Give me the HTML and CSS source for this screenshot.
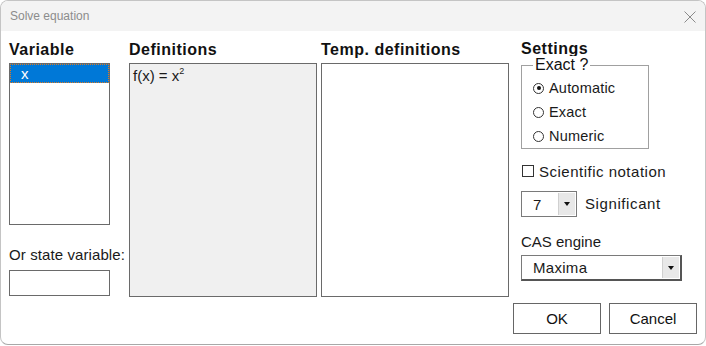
FILE: index.html
```html
<!DOCTYPE html>
<html lang="en">
<head>
    <meta charset="UTF-8">
    <title>Solve equation</title>
    <link rel="stylesheet" href="styles.css">
</head>
<body>
    <div class="window">
        <div class="titlebar">
            <span class="title">Solve equation</span>
            <svg class="close" width="12" height="12" viewBox="0 0 12 12">
                <path d="M0.5 0.5 L11.5 11.5 M11.5 0.5 L0.5 11.5" stroke="#8a8a8a" stroke-width="1" fill="none"/>
            </svg>
        </div>
        <div class="content">
            <div class="columns">
                <div class="col col-var">
                    <div class="header">Variable</div>
                    <div class="listbox">
                        <div class="item selected">x</div>
                    </div>
                    <div class="label state-label">Or state variable:</div>
                    <div class="textbox"></div>
                </div>
                <div class="col col-defs">
                    <div class="header">Definitions</div>
                    <div class="box defs">f(x) = x<sup>2</sup></div>
                </div>
                <div class="col col-temp">
                    <div class="header">Temp. definitions</div>
                    <div class="box temp"></div>
                </div>
                <div class="col col-settings">
                    <div class="header settings-header">Settings</div>
                    <fieldset class="group">
                        <legend>Exact ?</legend>
                        <div class="radio-row"><span class="radio checked"></span>Automatic</div>
                        <div class="radio-row"><span class="radio"></span>Exact</div>
                        <div class="radio-row"><span class="radio"></span>Numeric</div>
                    </fieldset>
                    <div class="check-row"><span class="checkbox"></span>Scientific notation</div>
                    <div class="sig-row">
                        <div class="combo small">
                            <span class="combo-text">7</span>
                            <span class="combo-btn"><span class="arrow"></span></span>
                        </div>
                        <span class="label sig-label">Significant</span>
                    </div>
                    <div class="label cas-label">CAS engine</div>
                    <div class="combo wide">
                        <span class="combo-text">Maxima</span>
                        <span class="combo-btn"><span class="arrow"></span></span>
                    </div>
                </div>
            </div>
            <div class="footer">
                <button class="btn">OK</button>
                <button class="btn">Cancel</button>
            </div>
        </div>
    </div>
</body>
</html>
```

FILE: styles.css
```css
body {
    margin: 0;
    background: #ffffff;
    font-family: "Liberation Sans", Arial, sans-serif;
    color: #1a1a1a;
}
.window {
    width: 706px;
    height: 345px;
    box-sizing: border-box;
    border: 1px solid #c4c4c4;
    border-bottom-color: #a8a8a8;
    border-radius: 8px;
    overflow: hidden;
    background: #ffffff;
}
.titlebar {
    height: 30px;
    background: #f3f3f3;
    display: flex;
    align-items: center;
    justify-content: space-between;
    padding: 0 9px 0 9px;
}
.title {
    font-size: 12px;
    color: #8c8c8c;
}
.close {
    margin-top: 1px;
}
.content {
    padding: 9px 8px 0 8px;
}
.columns {
    display: flex;
    align-items: flex-start;
}
.header {
    font-weight: bold;
    font-size: 16px;
    letter-spacing: 0.5px;
    line-height: 20px;
    height: 20px;
    margin-bottom: 3px;
    color: #111;
    white-space: nowrap;
}
.col-var {
    width: 101px;
}
.col-defs {
    width: 188px;
    margin-left: 19px;
}
.col-temp {
    width: 188px;
    margin-left: 4px;
}
.col-settings {
    width: 160px;
    margin-left: 12px;
}
.listbox {
    height: 162px;
    box-sizing: border-box;
    border: 1px solid #6a6a6a;
}
.item {
    height: 19px;
    line-height: 19px;
    font-size: 15px;
    padding-left: 11px;
}
.item.selected {
    background: #0078d7;
    color: #ffffff;
    outline: 1px dotted #e07a20;
    outline-offset: -1px;
}
.label {
    font-size: 15px;
    line-height: 18px;
}
.state-label {
    margin-top: 21px;
    letter-spacing: 0.1px;
    white-space: nowrap;
}
.textbox {
    margin-top: 6px;
    height: 26px;
    box-sizing: border-box;
    border: 1px solid #6a6a6a;
}
.box {
    height: 234px;
    box-sizing: border-box;
    border: 1px solid #6a6a6a;
    font-size: 15px;
    padding: 2px 3px;
}
.defs {
    background: #f0f0f0;
}
.defs sup {
    font-size: 9px;
    vertical-align: 7px;
}
.temp {
    background: #ffffff;
}
.settings-header {
    height: 16px;
    line-height: 18px;
    overflow: hidden;
    margin-bottom: 1px;
}
.group {
    margin: 0;
    width: 128px;
    box-sizing: border-box;
    border: 1px solid #a0a0a0;
    padding: 3px 0 0 11px;
}
.group legend {
    font-size: 16px;
    line-height: 16px;
    padding: 0 2px;
    color: #111;
}
.radio-row {
    height: 24px;
    display: flex;
    align-items: center;
    font-size: 14.5px;
    letter-spacing: 0.2px;
}
.radio {
    width: 9px;
    height: 9px;
    border: 1.5px solid #333;
    border-radius: 50%;
    margin-right: 5px;
    position: relative;
}
.radio.checked::after {
    content: "";
    position: absolute;
    left: 2.5px;
    top: 2.5px;
    width: 4px;
    height: 4px;
    border-radius: 50%;
    background: #111;
}
.check-row {
    margin-top: 11px;
    height: 22px;
    display: flex;
    align-items: center;
    font-size: 15px;
    letter-spacing: 0.5px;
    margin-left: 1px;
    white-space: nowrap;
}
.checkbox {
    width: 10px;
    height: 10px;
    border: 1.5px solid #333;
    margin-right: 5px;
}
.sig-row {
    margin-top: 9px;
    display: flex;
    align-items: center;
}
.sig-label {
    margin-left: 8px;
    letter-spacing: 0.6px;
}
.combo {
    height: 26px;
    box-sizing: border-box;
    border: 1px solid #7a7a7a;
    display: flex;
    align-items: stretch;
    font-size: 15px;
}
.combo.small {
    width: 56px;
}
.combo.wide {
    width: 161px;
    margin-top: 4px;
    border-right: 2px solid #555;
    border-bottom: 2px solid #555;
    letter-spacing: 0.3px;
}
.combo-text {
    flex: 1;
    display: flex;
    align-items: center;
    padding-left: 11px;
}
.combo-btn {
    width: 16px;
    margin: 1px;
    background: #e8e8e8;
    border-left: 1px solid #d0d0d0;
    display: flex;
    align-items: center;
    justify-content: center;
}
.arrow {
    width: 0;
    height: 0;
    border-left: 3.5px solid transparent;
    border-right: 3.5px solid transparent;
    border-top: 4px solid #111;
}
.cas-label {
    margin-top: 16px;
}
.footer {
    display: flex;
    justify-content: flex-end;
    gap: 8px;
    margin-top: 6px;
}
.btn {
    width: 88px;
    height: 31px;
    background: #ffffff;
    border: 1px solid #666;
    border-radius: 0;
    font-family: "Liberation Sans", Arial, sans-serif;
    font-size: 15px;
    color: #111;
    padding: 0;
}
```
